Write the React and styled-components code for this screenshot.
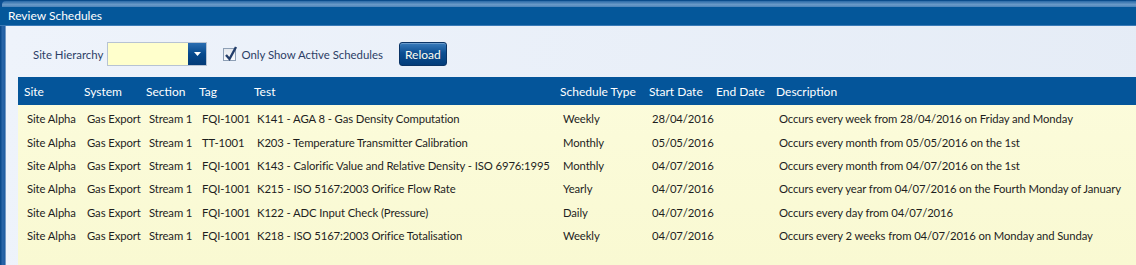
import React from "react";
import styled, { createGlobalStyle } from "styled-components";

const GlobalStyle = createGlobalStyle`
  html, body {
    margin: 0;
    padding: 0;
    background: #ffffff;
  }
  body {
    font-family: Lato, "Noto Sans", "Liberation Sans", sans-serif;
    font-size: 12px;
  }
`;

const Window = styled.div`
  width: 1136px;
  height: 265px;
  overflow: hidden;
  display: flex;
  flex-direction: column;
  background: #0b4f93;
  border-top: 1px solid #0a4c8c;
  box-sizing: border-box;
`;

const TopGlow = styled.div`
  height: 6px;
  margin-left: 2px;
  border-top-left-radius: 4px;
  background: linear-gradient(to bottom, #2a6aa8, #6a9ac8 60%, #4d84ba);
`;

const TitleBar = styled.div`
  height: 18px;
  line-height: 18px;
  padding-left: 8px;
  color: #ffffff;
  background: #04579a;
  border-bottom: 1px solid #3a7ab6;
`;

const Body = styled.div`
  flex: 1;
  display: flex;
  min-height: 0;
`;

const LeftEdge = styled.div`
  width: 6px;
  background: linear-gradient(to right, #0a4a8c 0, #0a4a8c 1px, #2a66a8 2px, #1f5ea3 5px, #c8d6e8 6px);
`;

// main content panel
const Content = styled.div`
  flex: 1;
  display: flex;
  flex-direction: column;
  padding: 15px 0 0 12px;
  background: linear-gradient(100deg, #eef3fb, #e5ecf6);
  min-width: 0;
`;

const Toolbar = styled.div`
  display: flex;
  align-items: center;
  height: 26px;
  padding-left: 15px;
  margin-bottom: 10px;
  font-size: 11.4px;
`;

const Label = styled.span`
  color: #2c3e66;
  margin-right: 4px;
`;

const Combo = styled.div`
  display: flex;
  width: 100px;
  height: 24px;
  box-sizing: border-box;
  border: 1px solid #b7c3d3;
  background: #ffffcc;
  margin-right: 16px;
`;

const ComboField = styled.div`
  flex: 1;
`;

const ComboButton = styled.div`
  width: 18px;
  display: flex;
  align-items: center;
  justify-content: center;
  background: linear-gradient(to bottom, #2a6db0, #05498d 50%, #033b78);
`;

const CheckBox = styled.div`
  width: 13px;
  height: 13px;
  box-sizing: border-box;
  border: 1px solid #8e9fb5;
  background: linear-gradient(to bottom, #e4e8ee, #fbfcfd);
  position: relative;
  margin-right: 5px;
  svg {
    position: absolute;
    left: 0px;
    top: -4px;
  }
`;

const CheckLabel = styled.span`
  color: #2c3e66;
  margin-right: 16px;
`;

const ReloadButton = styled.button`
  height: 24px;
  padding: 0 5px;
  font: inherit;
  font-size: 12px;
  color: #fffff0;
  border: 1px solid #0a3466;
  border-radius: 3px;
  background: linear-gradient(to bottom, #3a7cbc, #0c4f92 45%, #033d7a);
  box-shadow: inset 0 1px 0 rgba(255, 255, 255, 0.25);
  cursor: pointer;
`;

const Grid = styled.table`
  width: 100%;
  border-collapse: collapse;
  table-layout: fixed;
  flex: 1;
  color: #1e1e1e;
  background: linear-gradient(to bottom, #fcfcdc, #f9f9d2);
`;

const HeadRow = styled.tr`
  height: 28px;
  background: #04559a;
`;

const HeadCell = styled.th`
  text-align: left;
  font-weight: normal;
  color: #ffffff;
  padding: 0 0 0 6px;
  white-space: nowrap;
  overflow: hidden;
`;

const Row = styled.tr`
  height: 23.4px;
`;

const Cell = styled.td`
  padding: 0 0 0 9px;
  font-size: 11.3px;
  letter-spacing: -0.1px;
  white-space: nowrap;
  overflow: visible;
  vertical-align: middle;
`;

const Spacer = styled.tr`
  height: 1px;
`;

const columns = [
  { title: "Site", width: 60 },
  { title: "System", width: 62 },
  { title: "Section", width: 53 },
  { title: "Tag", width: 55 },
  { title: "Test", width: 306 },
  { title: "Schedule Type", width: 89 },
  { title: "Start Date", width: 67 },
  { title: "End Date", width: 60 },
  { title: "Description" },
];

const rows = [
  ["FQI-1001", "K141 - AGA 8 - Gas Density Computation", "Weekly", "28/04/2016", "Occurs every week from 28/04/2016 on Friday and Monday"],
  ["TT-1001", "K203 - Temperature Transmitter Calibration", "Monthly", "05/05/2016", "Occurs every month from 05/05/2016 on the 1st"],
  ["FQI-1001", "K143 - Calorific Value and Relative Density - ISO 6976:1995", "Monthly", "04/07/2016", "Occurs every month from 04/07/2016 on the 1st"],
  ["FQI-1001", "K215 - ISO 5167:2003 Orifice Flow Rate", "Yearly", "04/07/2016", "Occurs every year from 04/07/2016 on the Fourth Monday of January"],
  ["FQI-1001", "K122 - ADC Input Check (Pressure)", "Daily", "04/07/2016", "Occurs every day from 04/07/2016"],
  ["FQI-1001", "K218 - ISO 5167:2003 Orifice Totalisation", "Weekly", "04/07/2016", "Occurs every 2 weeks from 04/07/2016 on Monday and Sunday"],
];

const App = () => {
  return (
    <>
      <GlobalStyle />
      <Window>
        <TopGlow />
        <TitleBar>Review Schedules</TitleBar>
        <Body>
          <LeftEdge />
          <Content>
            {/* filter toolbar */}
            <Toolbar>
              <Label>Site Hierarchy</Label>
              <Combo>
                <ComboField />
                <ComboButton>
                  <svg width="7" height="4" viewBox="0 0 7 4">
                    <path d="M0 0 H7 L3.5 4 Z" fill="#ffffff" />
                  </svg>
                </ComboButton>
              </Combo>
              <CheckBox>
                <svg width="14" height="17" viewBox="0 0 14 17">
                  <path d="M2 10 L5.5 14 L12 2" fill="none" stroke="#243e6a" strokeWidth="2.4" />
                </svg>
              </CheckBox>
              <CheckLabel>Only Show Active Schedules</CheckLabel>
              <ReloadButton>Reload</ReloadButton>
            </Toolbar>
            {/* schedules grid */}
            <Grid>
              <colgroup>
                {columns.map((c) => (
                  <col key={c.title} style={c.width ? { width: c.width } : undefined} />
                ))}
              </colgroup>
              <thead>
                <HeadRow>
                  {columns.map((c) => (
                    <HeadCell key={c.title}>{c.title}</HeadCell>
                  ))}
                </HeadRow>
              </thead>
              <tbody>
                <Spacer>
                  <td colSpan={9} />
                </Spacer>
                {rows.map((r, i) => (
                  <Row key={i}>
                    <Cell>Site Alpha</Cell>
                    <Cell>Gas Export</Cell>
                    <Cell>Stream 1</Cell>
                    <Cell>{r[0]}</Cell>
                    <Cell>{r[1]}</Cell>
                    <Cell>{r[2]}</Cell>
                    <Cell>{r[3]}</Cell>
                    <Cell></Cell>
                    <Cell>{r[4]}</Cell>
                  </Row>
                ))}
                <tr>
                  <td colSpan={9} />
                </tr>
              </tbody>
            </Grid>
          </Content>
        </Body>
      </Window>
    </>
  );
};

export default App;
